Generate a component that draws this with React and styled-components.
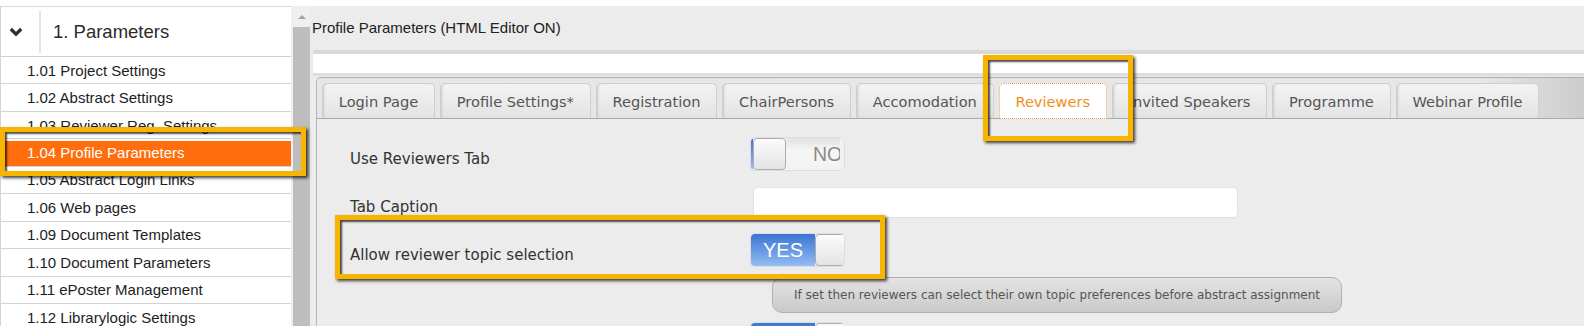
import React from "react";
import styled, { createGlobalStyle } from "styled-components";

const GlobalStyle = createGlobalStyle`
  html, body { margin: 0; padding: 0; background: #ffffff; overflow: hidden; }
  body { font-family: "Liberation Sans", Arial, sans-serif; }
  * { box-sizing: border-box; }
`;

const Page = styled.div`
  display: flex;
  margin-top: 6px;
  height: 320px;
  width: 1584px;
  overflow: hidden;
`;

const Sidebar = styled.nav`
  width: 291px;
  flex: none;
  background: #ffffff;
  border-left: 1px solid #d4d4d4;
`;

const SideHeader = styled.div`
  height: 51px;
  display: flex;
  align-items: center;
  border-top: 1px solid #d8d8d8;
  border-bottom: 1px solid #d0d0d0;
  padding-left: 8px;
`;

const HeaderDivider = styled.span`
  width: 2px;
  height: 42px;
  background: #e3e3e3;
  margin-left: 16px;
`;

const HeaderTitle = styled.span`
  margin-left: 12px;
  font-size: 18.5px;
  color: #2b2b2b;
`;

const NavItem = styled.div`
  position: relative;
  height: 27.45px;
  display: flex;
  align-items: center;
  padding-left: 26px;
  border-bottom: 1px solid #d3d3d3;
  font-size: 15px;
  color: ${(p) => (p.$active ? "#ffffff" : "#1d1d24")};
  background: ${(p) => (p.$active ? "#ff6d0c" : "transparent")};
  box-shadow: ${(p) => (p.$active ? "inset 3px 2px 0 #ffffff" : "none")};
`;

const Callout = styled.div`
  position: absolute;
  z-index: 20;
  top: ${(p) => p.$top}px;
  left: ${(p) => p.$left}px;
  width: ${(p) => p.$w}px;
  height: ${(p) => p.$h}px;
  border: 5px solid #f8b500;
  box-shadow: 2px 2px 3px rgba(0, 0, 0, 0.75), inset 2px 2px 2px rgba(0, 0, 0, 0.7);
  pointer-events: none;
`;

const ScrollBar = styled.div`
  width: 19px;
  flex: none;
  display: flex;
  flex-direction: column;
  background: #efefef;
`;

const ScrollArrow = styled.div`
  height: 21px;
  display: flex;
  justify-content: center;
  align-items: center;
  padding-left: 2px;
  &::before {
    content: "";
    border-left: 4.5px solid transparent;
    border-right: 4.5px solid transparent;
    border-bottom: 4.5px solid #a3a3a3;
  }
`;

const ScrollThumb = styled.div`
  flex: 1;
  margin-left: 2px;
  background: #bebebe;
`;

const Main = styled.main`
  flex: 1;
  min-width: 0;
  background: #ececec;
  padding-left: 2px;
  overflow: hidden;
`;

const TitleBar = styled.div`
  height: 44px;
  line-height: 44px;
  font-size: 15px;
  color: #222222;
`;

const EditorStrip = styled.div`
  margin-left: 1px;
  height: 26px;
  background: #ffffff;
  border-top: 4px solid #d9d9d9;
  border-bottom: 3px solid #dedede;
`;

const TabsWidget = styled.section`
  margin-left: 4px;
  margin-top: 1px;
  width: calc(100% + 20px);
  border-top: 1px solid #ababab;
  border-left: 1px solid #b5b5b5;
  border-top-left-radius: 5px;
`;

const TabBar = styled.div`
  display: flex;
  gap: 5px;
  padding: 5px 0 0 5px;
  height: 41px;
  border-bottom: 1px solid #ababab;
  border-top-left-radius: 5px;
  background: linear-gradient(to right, #e6e6e6 0%, #e7e7e7 90%, #c6c6c6 100%);
`;

const Tab = styled.div`
  position: relative;
  height: ${(p) => (p.$active ? 36 : 35)}px;
  padding: 0 15.8px;
  display: flex;
  align-items: center;
  border: 1px solid ${(p) => (p.$active ? "#e6a04a" : "#cfcfcf")};
  border-style: ${(p) => (p.$active ? "dotted" : "solid")};
  border-bottom: ${(p) => (p.$active ? "1px dotted #e6a04a" : "none")};
  border-radius: 5px 5px 0 0;
  background: ${(p) => (p.$active ? "#ffffff" : "linear-gradient(#f3f3f3, #e3e3e3)")};
  box-shadow: ${(p) => (p.$active ? "none" : "inset 2px 0 2px -1px #c8c8c8")};
  font-family: "DejaVu Sans", Verdana, sans-serif;
  font-size: 14.6px;
  color: ${(p) => (p.$active ? "#f0901a" : "#555555")};
  white-space: nowrap;
`;

const TabPanel = styled.div`
  padding: 11px 0 0 33px;
  display: flex;
  flex-direction: column;
`;

const FormRow = styled.div`
  position: relative;
  height: 48px;
  margin-top: ${(p) => p.$gap || 0}px;
  display: flex;
  align-items: center;
  width: 900px;
`;

const Label = styled.span`
  width: 401px;
  padding-top: 10px;
  font-family: "DejaVu Sans", Verdana, sans-serif;
  font-size: 15px;
  color: #333333;
`;

const Switch = styled.div`
  width: 93px;
  height: 32px;
  border-radius: 4px;
  overflow: hidden;
  background: #f1f1f1;
  box-shadow: 0 0 0 1px rgba(0, 0, 0, 0.06);
`;

const SwitchTrack = styled.div`
  display: flex;
  width: 170px;
  height: 100%;
  transform: translateX(${(p) => (p.$on ? 0 : -62)}px);
`;

const SwitchOn = styled.span`
  width: 64px;
  flex: none;
  display: flex;
  align-items: center;
  justify-content: center;
  background: linear-gradient(#3b76d3, #6a9ce4 55%, #93bdf2);
  color: #ffffff;
  font-size: 20px;
  padding-top: 1px;
`;

const SwitchKnob = styled.span`
  width: 33px;
  flex: none;
  border: 1px solid #adadad;
  border-radius: 4px;
  background: linear-gradient(#fbfbfb, #e4e4e4);
`;

const SwitchOff = styled.span`
  width: 54px;
  flex: none;
  overflow: hidden;
  white-space: nowrap;
  display: flex;
  align-items: center;
  padding-left: 27px;
  background: linear-gradient(#e2e2e2, #f6f6f6 40%, #f2f2f2);
  color: #8a8a8a;
  font-size: 19.5px;
  padding-top: 1px;
`;

const TextBox = styled.input`
  margin-left: 2px;
  width: 485px;
  height: 31px;
  border: 1px solid #e2e2e2;
  border-radius: 5px;
  background: #ffffff;
  outline: none;
`;

const HintBubble = styled.div`
  align-self: flex-start;
  margin: 3px 0 0 422px;
  height: 36px;
  padding: 0 21px;
  display: inline-flex;
  align-items: center;
  border: 1px solid #b0b0b0;
  border-radius: 10px;
  background: linear-gradient(#e4e4e4, #c9c9c9);
  font-family: "DejaVu Sans", Verdana, sans-serif;
  font-size: 12px;
  color: #555555;
  white-space: nowrap;
`;

function Toggle({ on }) {
  return (
    <Switch>
      <SwitchTrack $on={on}>
        <SwitchOn>YES</SwitchOn>
        <SwitchKnob />
        <SwitchOff>NO</SwitchOff>
      </SwitchTrack>
    </Switch>
  );
}

const navItems = [
  "1.01 Project Settings",
  "1.02 Abstract Settings",
  "1.03 Reviewer Reg. Settings",
  "1.04 Profile Parameters",
  "1.05 Abstract Login Links",
  "1.06 Web pages",
  "1.09 Document Templates",
  "1.10 Document Parameters",
  "1.11 ePoster Management",
  "1.12 Librarylogic Settings",
];

const tabs = [
  "Login Page",
  "Profile Settings*",
  "Registration",
  "ChairPersons",
  "Accomodation",
  "Reviewers",
  "Invited Speakers",
  "Programme",
  "Webinar Profile",
];

export default function App() {
  return (
    <>
      <GlobalStyle />
      <Page>
        <Sidebar>
          <SideHeader>
            <svg width="14" height="10" viewBox="0 0 14 10" aria-hidden="true">
              <polyline points="1.8,2 7,7.2 12.2,2" fill="none" stroke="#2f2f2f" strokeWidth="3.2" />
            </svg>
            <HeaderDivider />
            <HeaderTitle>1. Parameters</HeaderTitle>
          </SideHeader>
          {navItems.map((item) => {
            const active = item.startsWith("1.04");
            return (
              <NavItem key={item} $active={active}>
                {item}
                {active && <Callout $top={-12} $left={-1} $w={306} $h={49} />}
              </NavItem>
            );
          })}
        </Sidebar>
        <ScrollBar>
          <ScrollArrow />
          <ScrollThumb />
        </ScrollBar>
        <Main>
          <TitleBar>Profile Parameters (HTML Editor ON)</TitleBar>
          <EditorStrip />
          <TabsWidget>
            <TabBar>
              {tabs.map((t) => {
                const active = t === "Reviewers";
                return (
                  <Tab key={t} $active={active}>
                    {t}
                    {active && <Callout $top={-29} $left={-17} $w={150} $h={86} />}
                  </Tab>
                );
              })}
            </TabBar>
            <TabPanel>
              <FormRow>
                <Label>Use Reviewers Tab</Label>
                <Toggle on={false} />
              </FormRow>
              <FormRow>
                <Label>Tab Caption</Label>
                <TextBox type="text" />
              </FormRow>
              <FormRow>
                <Label>Allow reviewer topic selection</Label>
                <Toggle on={true} />
                <Callout $top={-11} $left={-15} $w={550} $h={64} />
              </FormRow>
              <HintBubble>
                If set then reviewers can select their own topic preferences before abstract assignment
              </HintBubble>
              <FormRow $gap={2}>
                <Label />
                <Toggle on={true} />
              </FormRow>
            </TabPanel>
          </TabsWidget>
        </Main>
      </Page>
    </>
  );
}
